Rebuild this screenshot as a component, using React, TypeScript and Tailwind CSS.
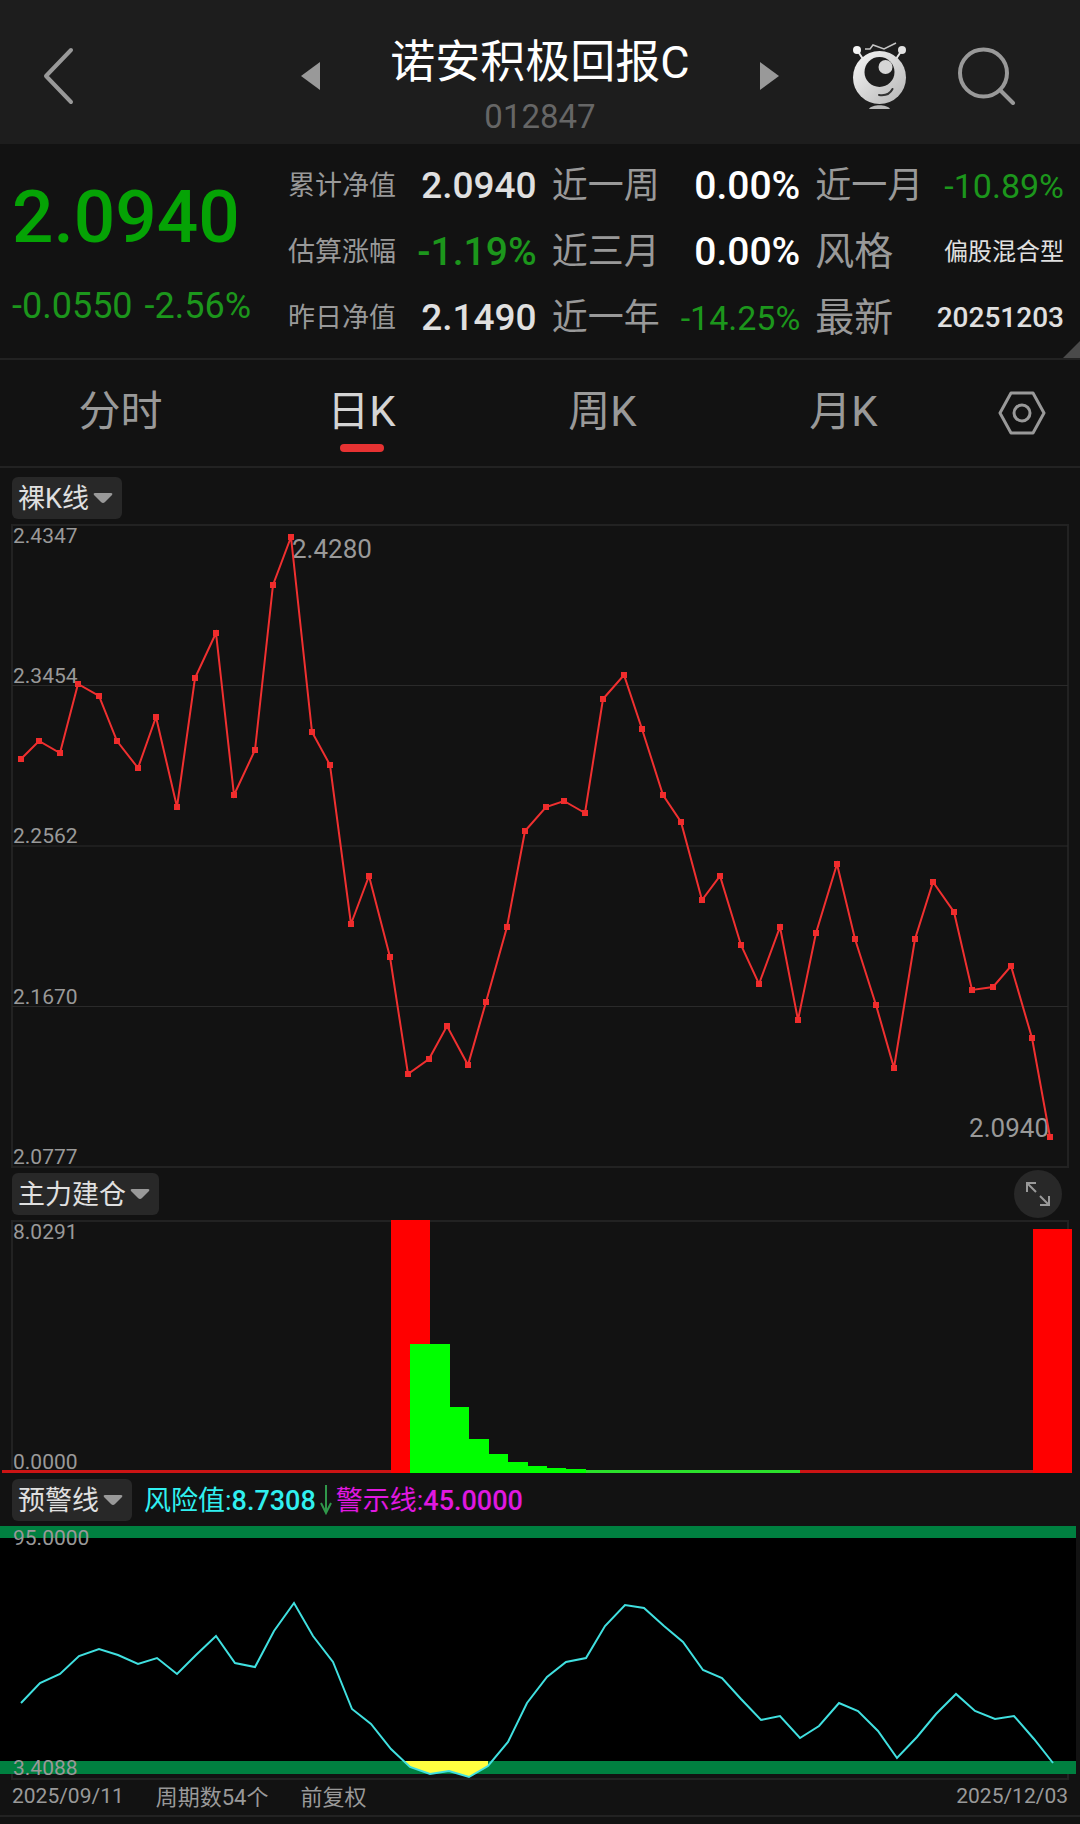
type Stat = { label: string; value: string; labelClass: string; valueClass: string };

const small = "text-[27px]";
const medium = "text-[36px]";
const large = "text-[39px]";

// listed row by row
const stats: Stat[] = [
  { label: "累计净值", value: "2.0940", labelClass: small, valueClass: "text-[37px] font-medium text-[#e0e0e0]" },
  { label: "近一周", value: "0.00%", labelClass: medium, valueClass: "text-[39px] font-medium text-white" },
  { label: "近一月", value: "-10.89%", labelClass: medium, valueClass: "text-[34px] text-[#1c961c]" },
  { label: "估算涨幅", value: "-1.19%", labelClass: small, valueClass: "text-[39px] font-medium text-[#1c961c]" },
  { label: "近三月", value: "0.00%", labelClass: medium, valueClass: "text-[39px] font-medium text-white" },
  { label: "风格", value: "偏股混合型", labelClass: large, valueClass: "text-[24px] text-[#e0e0e0]" },
  { label: "昨日净值", value: "2.1490", labelClass: small, valueClass: "text-[37px] font-medium text-[#e0e0e0]" },
  { label: "近一年", value: "-14.25%", labelClass: medium, valueClass: "text-[34px] text-[#1c961c]" },
  { label: "最新", value: "20251203", labelClass: large, valueClass: "text-[28px] font-medium text-[#e0e0e0]" },
];

const tabs = ["分时", "日K", "周K", "月K"];

const priceY = [
  237, 219, 231, 162, 174, 219, 246, 195, 285, 156, 111, 273, 228, 63, 15, 210, 243, 402, 354, 435, 552, 537, 504, 543,
  480, 405, 309, 285, 279, 291, 177, 153, 207, 273, 300, 378, 354, 423, 462, 405, 498, 411, 342, 417, 483, 546, 417, 360,
  390, 468, 465, 444, 516, 615,
];

// points snap to a 3px grid
const pricePoints = priceY.map((y, i) => [3 * Math.round((20.25 + i * 19.445) / 3), y]);

const riskY = [
  179, 159, 150, 132, 125, 131, 140, 134, 150, 131, 112, 139, 143, 107, 79, 112, 138, 185, 200, 225, 243, 250, 247, 253,
  242, 218, 179, 153, 138, 134, 102, 81, 84, 102, 118, 146, 154, 175, 196, 192, 214, 202, 179, 187, 207, 234, 213, 190,
  170, 187, 195, 192, 215, 239,
];

const riskPoints = riskY.map((y, i) => [Math.round(21 + (i * 1032) / 53), y]);

const toPoints = (points: number[][]) => points.map((p) => p.join(",")).join(" ");

const greenBars = [
  { x: 410, width: 40, y: 126 },
  { x: 450, width: 19, y: 189 },
  { x: 469, width: 20, y: 221 },
  { x: 489, width: 19, y: 236 },
  { x: 508, width: 20, y: 244 },
  { x: 528, width: 19, y: 248 },
  { x: 547, width: 19, y: 250 },
  { x: 566, width: 20, y: 251 },
];

function MascotIcon() {
  return (
    <svg width="56" height="68" viewBox="0 0 56 68" fill="none" aria-hidden="true">
      <defs>
        <linearGradient id="body" x1="0" y1="0" x2="1" y2="1">
          <stop offset="0" stopColor="#f8f8f8" />
          <stop offset="1" stopColor="#b4b4b4" />
        </linearGradient>
      </defs>
      <path d="M5 8 11 17M50 8 44 17" stroke="#e6e6e6" strokeWidth="2" />
      <circle cx="5" cy="8" r="4" fill="#f4f4f4" />
      <circle cx="50" cy="8" r="4" fill="#e2e2e2" />
      <path d="M13 7h5l3-4 11 4 12-6" stroke="#c4c4c4" strokeWidth="1.5" />
      <circle cx="27.500" cy="35.500" r="26.500" fill="url(#body)" />
      <circle cx="27.500" cy="30" r="15" fill="#1d1d1d" />
      <circle cx="33.500" cy="25" r="7" fill="#d6d6d6" />
      <path d="M27 53c7 1 11-1 13.500-6" stroke="#333" strokeWidth="2" strokeLinecap="round" />
      <path d="M17 67c3-5 18-5 21 0z" fill="#b9b9b9" />
    </svg>
  );
}

function Header() {
  return (
    <header className="grid h-36 grid-cols-[1fr_478px_1fr] items-center bg-[#1d1d1d] pt-2">
      <button aria-label="返回" className="ml-[42px] w-8">
        <svg width="32" height="58" viewBox="0 0 32 58" fill="none" stroke="#999" strokeWidth="4" strokeLinecap="round" strokeLinejoin="round">
          <path d="M29 3 4 29l25 26" />
        </svg>
      </button>
      <div className="flex items-center justify-between">
        <button aria-label="上一个">
          <svg width="19" height="28" viewBox="0 0 19 28" fill="#999">
            <path d="M19 0v28L0 14z" />
          </svg>
        </button>
        <div className="pt-7 text-center">
          <h1 className="text-[45px] leading-[54px] text-white">诺安积极回报C</h1>
          <p className="text-[33px] leading-[54px] text-[#666]">012847</p>
        </div>
        <button aria-label="下一个">
          <svg width="19" height="28" viewBox="0 0 19 28" fill="#999">
            <path d="M0 0v28l19-14z" />
          </svg>
        </button>
      </div>
      <div className="flex items-center justify-end gap-[50px] pr-16">
        <button aria-label="助手">
          <MascotIcon />
        </button>
        <button aria-label="搜索">
          <svg width="58" height="58" viewBox="0 0 58 58" fill="none" stroke="#999" strokeWidth="4" strokeLinecap="round">
            <circle cx="25.500" cy="26" r="23.500" />
            <path d="M42 43 55 56" />
          </svg>
        </button>
      </div>
    </header>
  );
}

function Quote() {
  return (
    <section className="relative flex border-b-2 border-[#222] pt-[9px] pr-4 pb-[7px] pl-3">
      <div className="w-[276px] shrink-0 text-[#1c961c]">
        <p className="pt-4 text-[73px] leading-[96px] font-medium text-[#05a305]">2.0940</p>
        <p className="flex gap-3 pt-4 text-[36px] leading-[50px] whitespace-nowrap">
          <span>-0.0550</span>
          <span>-2.56%</span>
        </p>
      </div>
      <dl className="grid flex-1 grid-cols-3 gap-x-[15px]">
        {stats.map((s) => (
          <div key={s.label} className="flex h-[66px] items-center justify-between whitespace-nowrap">
            <dt className={`text-[#999] ${s.labelClass}`}>{s.label}</dt>
            <dd className={s.valueClass}>{s.value}</dd>
          </div>
        ))}
      </dl>
      <svg className="absolute right-0 bottom-0" width="17" height="17" viewBox="0 0 17 17" fill="#4a4a4a" aria-hidden="true">
        <path d="M17 0v17H0z" />
      </svg>
    </section>
  );
}

function Tabs() {
  return (
    <nav className="flex h-[108px] border-b-2 border-[#222]">
      {tabs.map((tab) => {
        const active = tab === "日K";
        return (
          <button
            key={tab}
            className={`flex flex-1 flex-col items-center pt-5 text-[42px] leading-[64px] ${active ? "text-[#d4d4d4]" : "text-[#999]"}`}
          >
            {tab}
            {active && <span className="h-2 w-11 rounded-full bg-[#e63232]" />}
          </button>
        );
      })}
      <button aria-label="设置" className="flex w-[116px] items-center justify-center">
        <svg width="48" height="44" viewBox="0 0 48 44" fill="none" stroke="#999" strokeWidth="3" strokeLinejoin="round">
          <path d="M13 2h22l11 20-11 20H13L2 22z" />
          <circle cx="24" cy="22" r="8" />
        </svg>
      </button>
    </nav>
  );
}

function Picker({ label, value }: { label: string; value: string }) {
  return (
    <label className="flex h-[42px] items-center gap-1 rounded-md bg-[#282828] pr-[9px] pl-[6px]">
      <select aria-label={label} className="appearance-none bg-transparent pt-[2px] text-[27px] leading-[40px] text-[#e0e0e0]">
        <option>{value}</option>
      </select>
      <svg width="20" height="12" viewBox="0 0 20 12" fill="#999" aria-hidden="true">
        <path d="M2 1h16q2 0 1 2l-7 7q-2 2-4 0L1 3Q0 1 2 1z" />
      </svg>
    </label>
  );
}

function PriceChart() {
  return (
    <svg className="block w-full" viewBox="0 0 1080 648" role="img" aria-label="净值走势">
      <rect x="12" y="3" width="1056" height="642" fill="none" stroke="#222" strokeWidth="2" />
      <path d="M12 163.500h1056M12 324h1056M12 484.500h1056" stroke="#2a2a2a" strokeWidth="1" />
      <g fill="#999" fontSize="21">
        <text x="13" y="21">2.4347</text>
        <text x="13" y="161">2.3454</text>
        <text x="13" y="321">2.2562</text>
        <text x="13" y="482">2.1670</text>
        <text x="13" y="642">2.0777</text>
      </g>
      <g fill="#999" fontSize="26">
        <text x="292" y="36">2.4280</text>
        <text x="1049" y="615" textAnchor="end">2.0940</text>
      </g>
      <polyline points={toPoints(pricePoints)} fill="none" stroke="#f03030" strokeWidth="2" />
      {pricePoints.map(([x, y]) => (
        <rect key={x} x={x - 3} y={y - 3} width="6" height="6" fill="#f02c2c" />
      ))}
    </svg>
  );
}

function PositionChart() {
  return (
    <svg className="block w-full" viewBox="0 0 1080 258" role="img" aria-label="主力建仓">
      <path d="M12 255V3h1056v252" fill="none" stroke="#222" strokeWidth="2" />
      <g fill="#999" fontSize="21">
        <text x="13" y="21">8.0291</text>
        <text x="13" y="251">0.0000</text>
      </g>
      <rect x="2" y="252" width="389" height="3" fill="#cc1414" />
      <rect x="800" y="252" width="233" height="3" fill="#cc1414" />
      <rect x="391" y="2" width="39" height="253" fill="#f00" />
      <rect x="1033" y="11" width="39" height="244" fill="#f00" />
      {greenBars.map((bar) => (
        <rect key={bar.x} x={bar.x} y={bar.y} width={bar.width} height={255 - bar.y} fill="#0f0" />
      ))}
      <rect x="586" y="252" width="214" height="3" fill="#2be02b" />
    </svg>
  );
}

function RiskChart() {
  return (
    <svg className="block w-full" viewBox="0 0 1080 257" role="img" aria-label="预警线">
      <path d="M12 250v5h1056v-5" fill="none" stroke="#222" strokeWidth="2" />
      <rect y="2" width="1076" height="248" fill="#000" />
      <rect y="2" width="1076" height="12" fill="#008040" />
      <rect y="237" width="1076" height="13" fill="#008040" />
      <path d="M404 237 411 243 430 250 449 247 469 253 488 242V237z" fill="#ffff40" />
      <polyline points={toPoints(riskPoints)} fill="none" stroke="#40e0e0" strokeWidth="2" />
      <g fill="#999" fontSize="21">
        <text x="13" y="21">95.0000</text>
        <text x="13" y="251">3.4088</text>
      </g>
    </svg>
  );
}

export default function App() {
  return (
    <main className="min-h-screen bg-[#121212] [font-family:Roboto,'Noto_Sans_CJK_SC',sans-serif]">
      <Header />
      <Quote />
      <Tabs />
      <div className="flex px-3 pt-[9px] pb-[3px]">
        <Picker label="主图指标" value="裸K线" />
      </div>
      <PriceChart />
      <div className="flex h-12 items-center justify-between pr-[18px] pl-3">
        <Picker label="副图指标一" value="主力建仓" />
        <button aria-label="展开" className="flex size-12 items-center justify-center rounded-full bg-[#282828]">
          <svg width="26" height="26" viewBox="0 0 26 26" fill="none" stroke="#999" strokeWidth="2">
            <path d="M11 2H2v9M2 2l9 9M15 24h9v-9M24 24l-9-9" />
          </svg>
        </button>
      </div>
      <PositionChart />
      <div className="flex h-12 items-center px-3 text-[27px] leading-[40px] whitespace-nowrap">
        <Picker label="副图指标二" value="预警线" />
        <p className="ml-3 pt-[2px] text-[#30f0f0]">
          风险值:<span className="font-medium">8.7308</span>
        </p>
        <svg className="mx-1" width="12" height="30" viewBox="0 0 12 30" fill="none" stroke="#30984a" strokeWidth="2" aria-hidden="true">
          <path d="M6 0v28M1 18l5 10 5-10" />
        </svg>
        <p className="pt-[2px] text-[#e018e0]">
          警示线:<span className="font-medium">45.0000</span>
        </p>
      </div>
      <RiskChart />
      <footer className="flex h-9 items-center gap-8 border-b-2 border-[#222] px-3 pb-[2px] text-[21px] text-[#999]">
        <time>2025/09/11</time>
        <span className="text-[22px]">周期数54个</span>
        <span className="text-[22px]">前复权</span>
        <time className="ml-auto">2025/12/03</time>
      </footer>
    </main>
  );
}
